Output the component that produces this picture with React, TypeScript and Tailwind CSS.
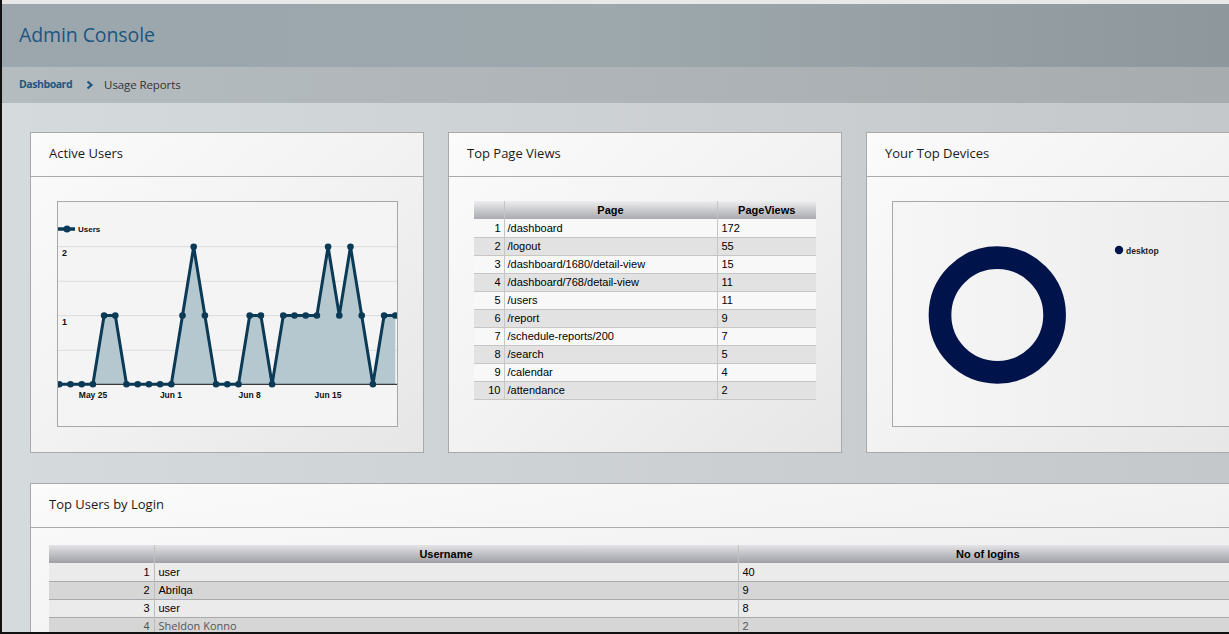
const users = [0, 0, 0, 0, 1, 1, 0, 0, 0, 0, 0, 1, 2, 1, 0, 0, 0, 1, 1, 0, 1, 1, 1, 1, 2, 1, 2, 1, 0, 1, 1]

const pageViews: [string, number][] = [
  ['/dashboard', 172],
  ['/logout', 55],
  ['/dashboard/1680/detail-view', 15],
  ['/dashboard/768/detail-view', 11],
  ['/users', 11],
  ['/report', 9],
  ['/schedule-reports/200', 7],
  ['/search', 5],
  ['/calendar', 4],
  ['/attendance', 2],
]

const logins: [string, number][] = [
  ['user', 40],
  ['Abrilqa', 9],
  ['user', 8],
  ['Sheldon Konno', 2],
]

const titleFont = { fontFamily: '"Open Sans", "Noto Sans", sans-serif' }

function Panel({ title, className, children }: { title: string; className?: string; children: React.ReactNode }) {
  return (
    <div className={`border border-[#a7a9aa] bg-gradient-to-br from-[#fbfbfb] via-[#f2f2f2] to-[#e6e6e6] ${className ?? ''}`}>
      <div className="h-[44px] border-b border-[#a9abac] flex items-center pl-[18px] pb-px">
        <span className="text-[13px] text-[#1a1a1a]" style={titleFont}>{title}</span>
      </div>
      {children}
    </div>
  )
}

function UsersChart() {
  const xs = users.map((_, i) => 1.3 + i * 11.2)
  const ys = users.map((v) => 182.3 - v * 68.8)
  const line = xs.map((x, i) => `${x},${ys[i]}`).join(' ')
  const area = `1.3,182.3 ${line} 337.3,182.3`
  return (
    <div className="w-[341px] h-[226px] border border-[#a8a8a8] bg-[#f4f4f4]">
      <svg width="339" height="224" viewBox="0 0 339 224" className="block" style={{ fontFamily: '"Liberation Sans", Arial, sans-serif' }}>
        {[44.7, 79.3, 113.7, 148.3].map((y) => (
          <line key={y} x1="0" x2="339" y1={y} y2={y} stroke="#dcdcdc" strokeWidth="1" />
        ))}
        <polygon points={area} fill="#b6c8cf" />
        <line x1="0" x2="339" y1="182.3" y2="182.3" stroke="#3a3a3a" strokeWidth="1.2" />
        <polyline points={line} fill="none" stroke="#0b3a56" strokeWidth="3" strokeLinejoin="miter" />
        {xs.map((x, i) => (
          <circle key={i} cx={x} cy={ys[i]} r="3.3" fill="#0b3a56" />
        ))}
        <line x1="0" x2="17" y1="27" y2="27" stroke="#0b3a56" strokeWidth="3.5" />
        <circle cx="9" cy="27" r="3.5" fill="#0b3a56" />
        <text x="20" y="30" fontSize="8" fontWeight="bold" fill="#111">Users</text>
        <text x="4" y="54" fontSize="9" fontWeight="bold" fill="#111">2</text>
        <text x="4" y="123" fontSize="9" fontWeight="bold" fill="#111">1</text>
        {[
          ['May 25', 35],
          ['Jun 1', 113],
          ['Jun 8', 191.7],
          ['Jun 15', 270],
        ].map(([t, x]) => (
          <text key={t as string} x={x as number} y="196" fontSize="8.5" fontWeight="bold" fill="#111" textAnchor="middle">{t}</text>
        ))}
      </svg>
    </div>
  )
}

function DevicesChart() {
  return (
    <div className="w-[341px] h-[226px] border border-[#a8a8a8] bg-gradient-to-r from-[#f6f6f6] to-[#ececec]">
      <svg width="339" height="224" viewBox="0 0 339 224" className="block" style={{ fontFamily: '"Liberation Sans", Arial, sans-serif' }}>
        <circle cx="104.3" cy="113" r="57.3" fill="none" stroke="#00134a" strokeWidth="22.7" />
        <circle cx="226" cy="48" r="4.2" fill="#00134a" />
        <text x="233" y="51.5" fontSize="8.5" fontWeight="bold" fill="#222">desktop</text>
      </svg>
    </div>
  )
}

function PageViewsTable() {
  return (
    <table className="w-[342px] border-collapse text-[11px] text-black" style={{ fontFamily: '"Liberation Sans", Arial, sans-serif' }}>
      <thead>
        <tr className="h-[18px] bg-gradient-to-b from-[#eeeef0] to-[#a9aab0]">
          <th className="w-[30px] border-r border-[#c4c4c6]"></th>
          <th className="w-[213px] border-r border-[#c4c4c6] font-bold">Page</th>
          <th className="font-bold">PageViews</th>
        </tr>
      </thead>
      <tbody>
        {pageViews.map(([p, v], i) => (
          <tr key={i} className={`h-[18px] border-b border-[#c6c6c6] ${i % 2 ? 'bg-[#e2e2e2]' : 'bg-[#f8f8f8]'}`}>
            <td className="text-right pr-[3px] border-r border-[#c6c6c6]">{i + 1}</td>
            <td className="pl-[3px] border-r border-[#c6c6c6]">{p}</td>
            <td className="pl-[4px]">{v}</td>
          </tr>
        ))}
      </tbody>
    </table>
  )
}

function LoginsTable() {
  return (
    <table className="w-[1188px] border-collapse text-[11px] text-black table-fixed" style={{ fontFamily: '"Liberation Sans", Arial, sans-serif' }}>
      <thead>
        <tr className="h-[18px] bg-gradient-to-b from-[#e4e4e7] to-[#9ea0a6]">
          <th className="w-[105px] border-r border-[#c2c2c4]"></th>
          <th className="w-[584px] border-r border-[#c2c2c4] font-bold">Username</th>
          <th className="font-bold">No of logins</th>
        </tr>
      </thead>
      <tbody>
        {logins.map(([u, n], i) => (
          <tr key={i} className={`h-[18px] border-b border-[#a9a9a9] ${i % 2 ? 'bg-[#d6d6d6]' : 'bg-[#ebebeb]'} ${i === 3 ? 'text-[#555]' : ''}`}>
            <td className="text-right pr-[4px] border-r border-[#bdbdbd]">{i + 1}</td>
            <td className="pl-[4px] border-r border-[#bdbdbd]" style={i === 3 ? titleFont : undefined}>{u}</td>
            <td className="pl-[4px]">{n}</td>
          </tr>
        ))}
      </tbody>
    </table>
  )
}

export default function App() {
  return (
    <div className="w-full h-[634px] overflow-hidden border-l-2 border-b-2 border-[#111] flex flex-col bg-gradient-to-r from-[#d5dadd] to-[#c4c8cb]">
      <div className="h-1 shrink-0 bg-[#e8e8e8]" />
      <div className="h-[63px] shrink-0 flex items-center pl-[17px] pb-[2px] bg-gradient-to-r from-[#9ba7ad] via-[#9da8ad] to-[#8e979c]">
        <span className="text-[19.5px] text-[#1c5680] tracking-[-0.1px]" style={titleFont}>Admin Console</span>
      </div>
      <div className="h-[36px] shrink-0 flex items-center pl-[17px] bg-gradient-to-r from-[#b5bcbf] to-[#a7acaf]" style={titleFont}>
        <span className="text-[10.5px] font-bold text-[#1c5680] tracking-[-0.45px]">Dashboard</span>
        <svg width="8" height="10" viewBox="0 0 8 10" className="ml-[14px] mr-[10px]">
          <path d="M1.5 1.5 L5.5 5 L1.5 8.5" fill="none" stroke="#1c5680" strokeWidth="2.2" />
        </svg>
        <span className="text-[11.5px] text-[#333] tracking-[-0.1px]">Usage Reports</span>
      </div>
      <div className="flex-1 pt-[29px] pl-[28px] flex flex-col gap-[30px]">
        <div className="flex gap-[24px] w-[1250px]">
          <Panel title="Active Users" className="w-[394px] h-[321px] shrink-0">
            <div className="pt-[24px] pl-[26px]">
              <UsersChart />
            </div>
          </Panel>
          <Panel title="Top Page Views" className="w-[394px] h-[321px] shrink-0">
            <div className="pt-[24px] pl-[25px]">
              <PageViewsTable />
            </div>
          </Panel>
          <Panel title="Your Top Devices" className="w-[394px] h-[321px] shrink-0">
            <div className="pt-[24px] pl-[25px]">
              <DevicesChart />
            </div>
          </Panel>
        </div>
        <Panel title="Top Users by Login" className="w-[1240px] h-[200px] shrink-0">
          <div className="pt-[17px] pl-[18px]">
            <LoginsTable />
          </div>
        </Panel>
      </div>
    </div>
  )
}
